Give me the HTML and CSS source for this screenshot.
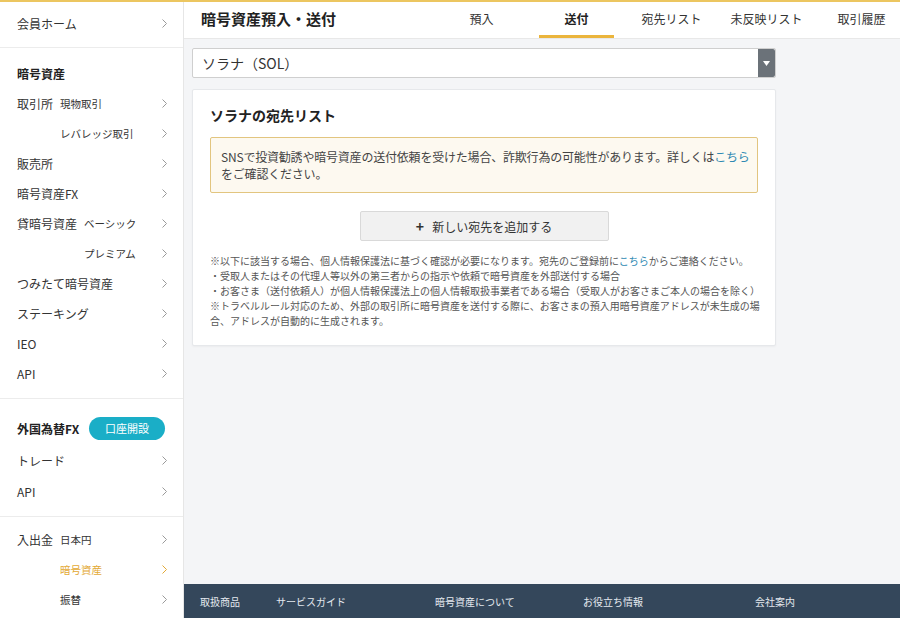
FILE: index.html
```html
<!DOCTYPE html>
<html lang="ja">
<head>
<meta charset="utf-8">
<title>暗号資産預入・送付</title>
<link rel="stylesheet" href="styles.css">
</head>
<body>
<aside class="sidebar">
  <div class="sec sec-home">
    <a class="row"><span class="lbl">会員ホーム</span><svg class="chev" width="5" height="9" viewBox="0 0 5 9"><polyline points="0.5,0.5 4.5,4.5 0.5,8.5"/></svg></a>
  </div>
  <div class="sec sec-crypto">
    <div class="row sec-title">暗号資産</div>
    <a class="row"><span class="lbl lbl-a">取引所</span><span class="sub">現物取引</span><svg class="chev" width="5" height="9" viewBox="0 0 5 9"><polyline points="0.5,0.5 4.5,4.5 0.5,8.5"/></svg></a>
    <a class="row"><span class="sub sub-a">レバレッジ取引</span><svg class="chev" width="5" height="9" viewBox="0 0 5 9"><polyline points="0.5,0.5 4.5,4.5 0.5,8.5"/></svg></a>
    <a class="row"><span class="lbl">販売所</span><svg class="chev" width="5" height="9" viewBox="0 0 5 9"><polyline points="0.5,0.5 4.5,4.5 0.5,8.5"/></svg></a>
    <a class="row"><span class="lbl">暗号資産FX</span><svg class="chev" width="5" height="9" viewBox="0 0 5 9"><polyline points="0.5,0.5 4.5,4.5 0.5,8.5"/></svg></a>
    <a class="row"><span class="lbl lbl-b">貸暗号資産</span><span class="sub">ベーシック</span><svg class="chev" width="5" height="9" viewBox="0 0 5 9"><polyline points="0.5,0.5 4.5,4.5 0.5,8.5"/></svg></a>
    <a class="row"><span class="sub sub-b">プレミアム</span><svg class="chev" width="5" height="9" viewBox="0 0 5 9"><polyline points="0.5,0.5 4.5,4.5 0.5,8.5"/></svg></a>
    <a class="row"><span class="lbl">つみたて暗号資産</span><svg class="chev" width="5" height="9" viewBox="0 0 5 9"><polyline points="0.5,0.5 4.5,4.5 0.5,8.5"/></svg></a>
    <a class="row"><span class="lbl">ステーキング</span><svg class="chev" width="5" height="9" viewBox="0 0 5 9"><polyline points="0.5,0.5 4.5,4.5 0.5,8.5"/></svg></a>
    <a class="row"><span class="lbl">IEO</span><svg class="chev" width="5" height="9" viewBox="0 0 5 9"><polyline points="0.5,0.5 4.5,4.5 0.5,8.5"/></svg></a>
    <a class="row"><span class="lbl">API</span><svg class="chev" width="5" height="9" viewBox="0 0 5 9"><polyline points="0.5,0.5 4.5,4.5 0.5,8.5"/></svg></a>
  </div>
  <div class="sec sec-fx">
    <div class="row sec-title fx-title"><span>外国為替FX</span><span class="open-btn">口座開設</span></div>
    <a class="row"><span class="lbl">トレード</span><svg class="chev" width="5" height="9" viewBox="0 0 5 9"><polyline points="0.5,0.5 4.5,4.5 0.5,8.5"/></svg></a>
    <a class="row"><span class="lbl">API</span><svg class="chev" width="5" height="9" viewBox="0 0 5 9"><polyline points="0.5,0.5 4.5,4.5 0.5,8.5"/></svg></a>
  </div>
  <div class="sec sec-money">
    <a class="row"><span class="lbl lbl-a">入出金</span><span class="sub">日本円</span><svg class="chev" width="5" height="9" viewBox="0 0 5 9"><polyline points="0.5,0.5 4.5,4.5 0.5,8.5"/></svg></a>
    <a class="row active"><span class="sub sub-a">暗号資産</span><svg class="chev" width="5" height="9" viewBox="0 0 5 9"><polyline points="0.5,0.5 4.5,4.5 0.5,8.5"/></svg></a>
    <a class="row"><span class="sub sub-a">振替</span><svg class="chev" width="5" height="9" viewBox="0 0 5 9"><polyline points="0.5,0.5 4.5,4.5 0.5,8.5"/></svg></a>
  </div>
</aside>

<div class="main">
  <header class="header">
    <h1 class="page-title">暗号資産預入・送付</h1>
    <nav class="tabs">
      <a class="tab"><span class="tab-label">預入</span></a>
      <a class="tab active"><span class="tab-label">送付</span></a>
      <a class="tab"><span class="tab-label">宛先リスト</span></a>
      <a class="tab"><span class="tab-label">未反映リスト</span></a>
      <a class="tab"><span class="tab-label">取引履歴</span></a>
    </nav>
  </header>

  <div class="content">
    <div class="select">
      <span class="select-text">ソラナ（SOL）</span>
      <span class="select-arrow"><svg width="7" height="5" viewBox="0 0 7 5"><polygon points="0,0 7,0 3.5,5" fill="#fff"/></svg></span>
    </div>

    <section class="card">
      <h2 class="card-title">ソラナの宛先リスト</h2>
      <div class="alert">
        SNSで投資勧誘や暗号資産の送付依頼を受けた場合、詐欺行為の可能性があります。詳しくは<a class="link">こちら</a><br>をご確認ください。
      </div>
      <div class="btn-wrap">
        <button class="add-btn"><span class="plus">+</span>新しい宛先を追加する</button>
      </div>
      <p class="notes">※以下に該当する場合、個人情報保護法に基づく確認が必要になります。宛先のご登録前に<a class="link">こちら</a>からご連絡ください。<br>・受取人またはその代理人等以外の第三者からの指示や依頼で暗号資産を外部送付する場合<br>・お客さま（送付依頼人）が個人情報保護法上の個人情報取扱事業者である場合（受取人がお客さまご本人の場合を除く）<br>※トラベルルール対応のため、外部の取引所に暗号資産を送付する際に、お客さまの預入用暗号資産アドレスが未生成の場<br>合、アドレスが自動的に生成されます。</p>
    </section>
  </div>

  <footer class="footer">
    <a>取扱商品</a>
    <a>サービスガイド</a>
    <a>暗号資産について</a>
    <a>お役立ち情報</a>
    <a>会社案内</a>
  </footer>
</div>
</body>
</html>
```

FILE: styles.css
```css
* {
  box-sizing: border-box;
  margin: 0;
  padding: 0;
}

html, body {
  height: 100%;
}

body {
  font-family: "Noto Sans CJK JP", "Noto Sans", sans-serif;
  color: #333;
  background: #f4f5f7;
  border-top: 2px solid #ecc660;
  display: flex;
  height: 618px;
  overflow: hidden;
}

a {
  color: inherit;
  text-decoration: none;
}

/* ---------- sidebar ---------- */
.sidebar {
  width: 184px;
  flex-shrink: 0;
  background: #fff;
  border-right: 1px solid #e6e6e6;
  height: 100%;
}

.sec {
  border-bottom: 1px solid #ececec;
}

.sec-home {
  height: 46px;
  padding-top: 6px;
}

.sec-crypto {
  padding: 10px 0 10px;
}

.sec-fx {
  padding: 12px 0 9px;
}

.sec-fx .row {
  height: 31px;
}

.sec-fx .fx-title {
  height: 34px;
}

.sec-money {
  border-bottom: none;
  padding-top: 7px;
}

.row {
  display: flex;
  align-items: center;
  height: 30px;
  padding: 0 16px 0 17px;
  font-size: 12px;
  color: #333;
}

.sec-title {
  font-weight: bold;
  color: #222;
}

.open-btn {
  margin-left: auto;
  margin-right: 2px;
  width: 76px;
  height: 23px;
  border-radius: 12px;
  background: #1aaec7;
  color: #fff;
  font-size: 11px;
  font-weight: normal;
  display: flex;
  align-items: center;
  justify-content: center;
}

.lbl-a { width: 43px; }
.lbl-b { width: 67px; }

.sub {
  font-size: 10.5px;
  color: #333;
}

.sub-a { margin-left: 43px; }
.sub-b { margin-left: 67px; }

.chev {
  margin-left: auto;
  fill: none;
  stroke: #9a9a9a;
  stroke-width: 1;
}

.row.active .sub {
  color: #e3a935;
}

.row.active .chev {
  stroke: #e3a935;
}

/* ---------- main ---------- */
.main {
  flex: 1;
  min-width: 0;
  display: flex;
  flex-direction: column;
  height: 100%;
}

.header {
  height: 37px;
  flex-shrink: 0;
  background: #fff;
  border-bottom: 1px solid #e8e8e8;
  display: flex;
  align-items: stretch;
  padding-left: 17px;
  overflow: hidden;
}

.page-title {
  flex: 1;
  font-size: 15px;
  font-weight: bold;
  color: #222;
  line-height: 34px;
}

.tabs {
  display: flex;
  flex-shrink: 0;
  margin-right: -9px;
}

.tab {
  width: 95px;
  padding: 0 10px;
  font-size: 12px;
  color: #333;
  text-align: center;
}

.tab-label {
  display: block;
  height: 36px;
  line-height: 34px;
  border-bottom: 3px solid transparent;
}

.tab.active .tab-label {
  font-weight: bold;
  color: #222;
  border-bottom-color: #ebb53c;
}

.content {
  flex: 1;
  padding: 9px 8px 0;
}

.select {
  width: 584px;
  height: 30px;
  background: #fff;
  border: 1px solid #cfcfcf;
  border-radius: 2px;
  display: flex;
  align-items: center;
  padding-left: 9px;
}

.select-text {
  flex: 1;
  font-size: 14px;
  color: #333;
}

.select-arrow {
  width: 17px;
  height: 28px;
  background: #6b7279;
  border-radius: 0 2px 2px 0;
  display: flex;
  align-items: center;
  justify-content: center;
}

.card {
  margin-top: 11px;
  width: 584px;
  background: #fff;
  border: 1px solid #e6e8eb;
  border-radius: 2px;
  box-shadow: 0 1px 2px rgba(0, 0, 0, 0.04);
  padding: 15px 17px 17px;
}

.card-title {
  font-size: 14px;
  font-weight: bold;
  color: #222;
  line-height: 20px;
}

.alert {
  margin-top: 12px;
  background: #fdf9f0;
  border: 1px solid #e2c57f;
  border-radius: 2px;
  padding: 10px 10px 10px;
  font-size: 12px;
  line-height: 17px;
  color: #444;
  white-space: nowrap;
  letter-spacing: -0.2px;
}

.link {
  color: #2f8ab3;
}

.btn-wrap {
  margin-top: 18px;
  display: flex;
  justify-content: center;
}

.add-btn {
  width: 249px;
  height: 30px;
  background: #f1f1f1;
  border: 1px solid #d9d9d9;
  border-radius: 2px;
  font-family: inherit;
  font-size: 12px;
  color: #333;
  display: flex;
  align-items: center;
  justify-content: center;
}

.plus {
  font-weight: bold;
  font-size: 14px;
  margin-right: 8px;
  line-height: 1;
}

.notes {
  margin-top: 12px;
  font-size: 10px;
  line-height: 15px;
  color: #555;
  white-space: nowrap;
}

/* ---------- footer ---------- */
.footer {
  height: 34px;
  flex-shrink: 0;
  background: #34475b;
  display: grid;
  grid-template-columns: 76px 159px 148px 172px 1fr;
  align-items: center;
  padding-left: 16px;
  font-size: 10px;
  color: #e4e9ef;
}
```
